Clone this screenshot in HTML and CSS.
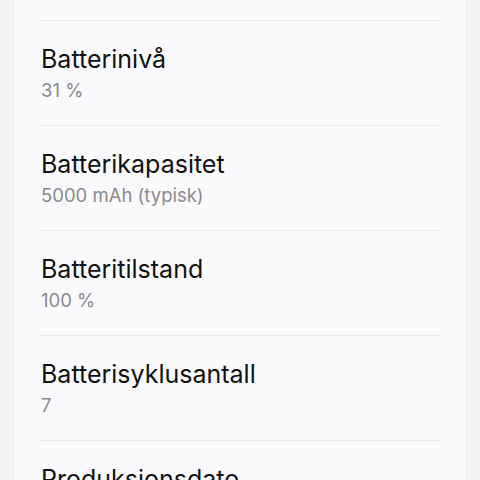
FILE: index.html
```html
<!DOCTYPE html>
<html lang="nb">
<head>
    <meta charset="UTF-8">
    <meta name="viewport" content="width=device-width, initial-scale=1.0">
    <title>Batteriinformasjon</title>
    <link rel="stylesheet" href="styles.css">
</head>
<body>
    <div class="card">
        <div class="item">
            <div class="title">Batterinivå</div>
            <div class="value">31 %</div>
        </div>
        <div class="item">
            <div class="title">Batterikapasitet</div>
            <div class="value">5000 mAh (typisk)</div>
        </div>
        <div class="item">
            <div class="title">Batteritilstand</div>
            <div class="value">100 %</div>
        </div>
        <div class="item">
            <div class="title">Batterisyklusantall</div>
            <div class="value">7</div>
        </div>
        <div class="item">
            <div class="title">Produksjonsdato</div>
            <div class="value">2024-05-12</div>
        </div>
    </div>
</body>
</html>
```

FILE: styles.css
```css
body {
    margin: 0;
    background-color: #f2f2f4;
    font-family: Inter, Roboto, sans-serif;
    height: 480px;
    overflow: hidden;
}
.card {
    background: #fafafc;
    margin: 0 15px;
    padding: 20px 25px 0;
    min-height: 600px;
}
.item {
    border-top: 1px solid #e8e8ea;
    padding: 23px 0 23px 1px;
}
.title {
    font-size: 25px;
    line-height: 30px;
    color: #111;
}
.value {
    margin-top: 4px;
    font-size: 18.5px;
    line-height: 24px;
    color: #8a8a8c;
}
```
